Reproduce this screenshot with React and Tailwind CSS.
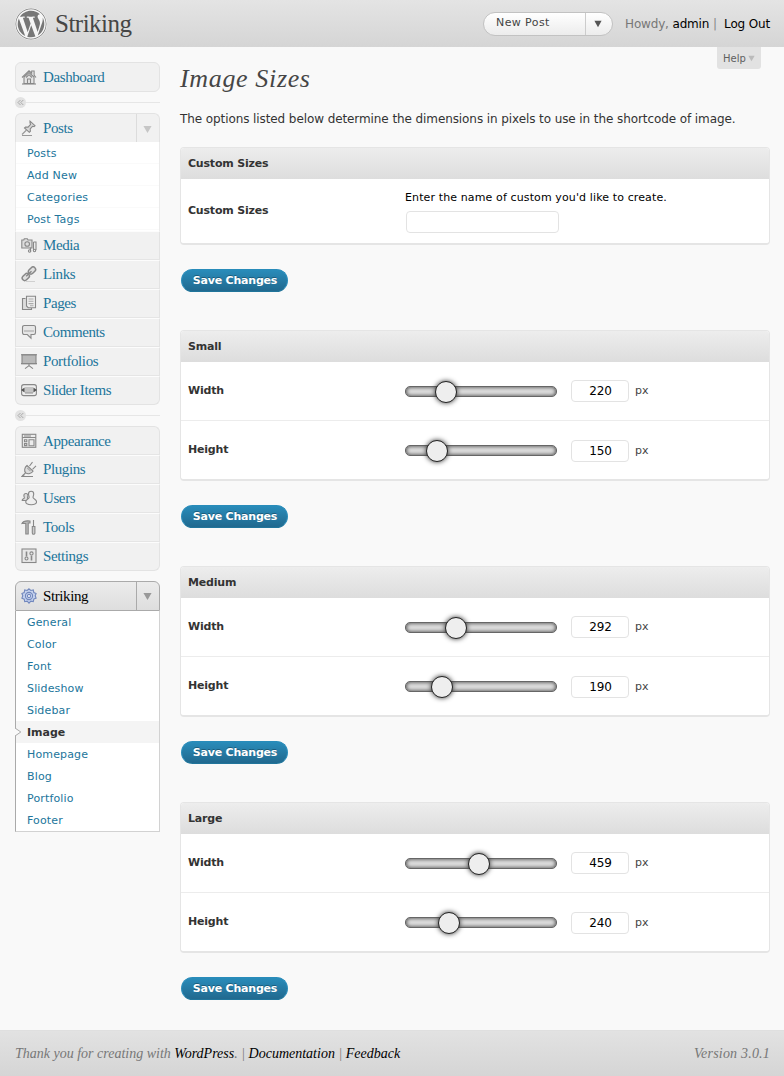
import React from "react";
import { FaWordpress } from "react-icons/fa";

const iconPaths = {
  home: (
    <g>
      <path fill="#e4e4e4" d="M3 8v6.500h10V8L8 3.500z" />
      <path d="M1 8.500 8 1.800l2.700 2.400V2h2.400v4.200L15 8.500" />
      <path d="M6.500 14.500V10h3v4.500M5 8.500 8 5.700l3 2.800" />
      <path d="M1 15h14" />
    </g>
  ),
  pin: (
    <g>
      <path fill="#d8d8d8" d="M9 1.200l5 4.500-1 .9-1.500-.3-2.300 2.600.2 2.400-1.100 1L3.500 8l1-1 2.600.1L9.600 4.400 9 3z" />
      <path d="M5.500 10 1 14.500M1 15.500h10" stroke="#999" />
    </g>
  ),
  media: (
    <g>
      <path fill="#ddd" d="M.8 3h2l.5-1.300h3L7 3h4v8H.8z" />
      <circle cx="6.200" cy="7" r="2.300" />
      <path d="M12.500 5H15v8M12.500 5v8M9.500 10.500v4" />
      <circle cx="8.600" cy="14" r="1.200" />
      <circle cx="13.500" cy="13.500" r="1.200" />
    </g>
  ),
  link: (
    <g strokeWidth="1.500">
      <rect x="7" y="2" width="8" height="5" rx="2.500" transform="rotate(-45 11 4.500)" fill="#e0e0e0" />
      <rect x=".8" y="8.500" width="8" height="5" rx="2.500" transform="rotate(-45 4.800 11)" fill="#e0e0e0" />
      <path d="M5.200 10.200 10.500 5.200" />
      <path d="M5 15.500h9" stroke="#d0d0d0" strokeWidth="1" />
    </g>
  ),
  pages: (
    <g>
      <path fill="#ddd" d="M4.500 3.500H1.500v11h9V13" />
      <path fill="#eee" d="M5.500 1.200h9v11.500H7.200L5.500 11z" />
      <path d="M7.500 4h5M7.500 6.300h5M7.500 8.600h5M9 10.700h3.500" stroke="#aaa" />
    </g>
  ),
  comment: (
    <g>
      <path fill="#e6e6e6" d="M3.200 1.500h9.600a1.700 1.700 0 0 1 1.700 1.700v5.600a1.700 1.700 0 0 1-1.700 1.700H10v3.700l-3.700-3.700H3.200a1.700 1.700 0 0 1-1.700-1.700V3.200a1.700 1.700 0 0 1 1.700-1.700z" />
      <path d="M3 7h10" stroke="#c4c4c4" strokeWidth="2" />
    </g>
  ),
  board: (
    <g>
      <rect x="1" y="1.800" width="14" height="8.800" fill="#b9b9b9" />
      <path d="M0 1.800h16M0 10.600h16M8 10.600V13M4 15.600 8 12.600l4 3" />
    </g>
  ),
  slider: (
    <g>
      <rect x=".6" y="2.600" width="14.800" height="11" rx="2.200" fill="#eee" />
      <rect x="4" y="5" width="8" height="6" fill="#c4c4c4" stroke="none" />
      <path fill="#555" stroke="none" d="M0 8 3.600 5.600v5zM16 8l-3.600-2.400v5z" />
      <path d="M4 11h8" stroke="#999" />
    </g>
  ),
  layout: (
    <g>
      <rect x="1.300" y="1.300" width="13.500" height="13" fill="#ececec" />
      <path d="M1.300 4.500h13.500M3 3h7" />
      <path d="M3.500 6.800h2.300v2H3.500zM3.500 10.600h2.300v2H3.500zM8 6.700h5v6H8z" />
    </g>
  ),
  plug: (
    <g>
      <path fill="#ddd" d="M6 4.500 12 10.200c-1.500 2.300-5 3.300-7.200 1.700C2.800 10 3.500 6.500 6 4.500z" />
      <path d="M8.500 5 11.500 1.200M11.500 8.300 15 4.800M4.500 12 1.200 15M3.300 13.800 1 15.500h11" />
      <path d="M6.200 7 9.500 10" stroke="#aaa" />
    </g>
  ),
  users: (
    <g>
      <path fill="#ddd" d="M5 3.500c1.300 0 1.900.9 1.900 2 0 1.200-.5 1.900-.4 2.700.4.700 1.500 1 1.700 2.300H1.200C1 8.800 3 8.900 3.300 8c.2-.7-.4-1.400-.4-2.500 0-1.100.7-2 2.100-2z" />
      <path fill="#eee" d="M10.200 1.200c1.600 0 2.500 1 2.500 2.700 0 1.700-.8 2.500-.6 3.700.4 1.400 3.300 1.600 3.500 4.200 0 2.200-1.800 2.900-5.300 2.900s-5.600-.7-5.600-2.900c.2-2.500 3-2.800 3.400-4.200.2-1.200-.6-2-.6-3.700 0-1.700 1.100-2.700 2.700-2.700z" />
    </g>
  ),
  tools: (
    <g>
      <path fill="#bbb" d="M1 4.500C2 2 4 1.500 9 2v2H7.200v11H4.800V4.500C3 4.300 2 4.300 1 4.500z" />
      <path fill="#ccc" d="M12.500 1v6M11.300 7.500h2.600v6.500a1.300 1.300 0 0 1-2.600 0z" />
    </g>
  ),
  sliders: (
    <g>
      <rect x="1" y="1" width="14" height="13.500" fill="#e8e8e8" />
      <path d="M5.500 3.500v5M10.500 8v4.500" strokeWidth="1.600" />
      <circle cx="5.500" cy="10.500" r="1.500" />
      <circle cx="10.500" cy="5.500" r="1.600" />
    </g>
  ),
  gear: (
    <g stroke="#7288bd">
      <path fill="#c5d2ee" d="M8 .8l1.800 1.700 2.500-.5.5 2.500 2.300 1-.900 2.300.900 2.300-2.300 1-.500 2.500-2.500-.500L8 15.200l-1.800-2-2.500.500-.500-2.500-2.300-1 .900-2.400-.900-2.300 2.300-1 .500-2.500 2.500.500z" />
      <circle cx="8" cy="8" r="3.600" />
      <circle cx="8" cy="8" r="1.600" fill="#f4f6fc" />
    </g>
  ),
};

function MenuIcon({ name }) {
  return (
    <svg className="ml-[5px] h-4 w-4 shrink-0" viewBox="0 0 16 16" fill="none" stroke="#888" strokeWidth="1.1">
      {iconPaths[name]}
    </svg>
  );
}

function Down({ className }) {
  return (
    <svg className={className} viewBox="0 0 10 10" fill="currentColor">
      <path d="M.5 1h9L5 9z" />
    </svg>
  );
}

const menuText = "ml-[6px] whitespace-nowrap font-['Liberation_Serif',serif] text-[15px] leading-[18px] tracking-[-0.4px]";

function MenuRow({ icon, label, first, last }) {
  return (
    <a
      className={
        "flex h-[29px] items-center border-x border-[#e3e3e3] bg-[#f1f1f1] text-[#21759b] " +
        (first ? "rounded-t-md border-t " : "border-t border-t-[#fcfcfc] pb-[2px] ") +
        (last ? "rounded-b-md border-b border-b-[#e3e3e3]" : "border-b border-b-[#e5e5e5]")
      }
    >
      <MenuIcon name={icon} />
      <span className={menuText}>{label}</span>
    </a>
  );
}

function Separator() {
  return (
    <div className="flex h-[11px] items-center">
      <span className="flex h-[11px] w-[11px] items-center justify-center rounded-full bg-[#e2e2e2]">
        <svg className="h-[7px] w-[7px]" viewBox="0 0 7 7" fill="none" stroke="#aaa">
          <path d="M3.500 1 1 3.500 3.500 6M6.300 1 3.800 3.500 6.300 6" />
        </svg>
      </span>
      <span className="h-px flex-1 bg-[#e6e6e6]" />
    </div>
  );
}

const subText = "pl-[11px] pt-px whitespace-nowrap font-['DejaVu_Sans',sans-serif] text-[11px] leading-[21px]";

function Sidebar() {
  return (
    <nav className="w-[145px] shrink-0 pt-[15px]">
      <a className="flex h-[30px] items-center rounded-md border border-[#e3e3e3] bg-[#f1f1f1] text-[#21759b]">
        <MenuIcon name="home" />
        <span className={menuText}>Dashboard</span>
      </a>
      <div className="pt-[5px] pb-[5px]"><Separator /></div>

      <div className="flex h-[29px] items-center rounded-t-md border border-b-0 border-[#e3e3e3] bg-[#f1f1f1] text-[#21759b]">
        <MenuIcon name="pin" />
        <span className={menuText + " flex-1"}>Posts</span>
        <span className="flex h-full w-[23px] items-center justify-center border-l border-[#dcdcdc] pr-px text-[#c6c6c6]">
          <Down className="mt-[3px] h-[9px] w-[9px]" />
        </span>
      </div>
      <div className="border-x border-[#ebebeb] bg-white pb-px">
        {["Posts", "Add New", "Categories", "Post Tags"].map((t) => (
          <a key={t} className={"block h-[22px] border-b border-[#fafafa] tracking-[0.2px] text-[#21759b] " + subText}>{t}</a>
        ))}
      </div>
      <MenuRow icon="media" label="Media" />
      <MenuRow icon="link" label="Links" />
      <MenuRow icon="pages" label="Pages" />
      <MenuRow icon="comment" label="Comments" />
      <MenuRow icon="board" label="Portfolios" />
      <MenuRow icon="slider" label="Slider Items" last />

      <div className="pt-[5px] pb-[5px]"><Separator /></div>
      <MenuRow icon="layout" label="Appearance" first />
      <MenuRow icon="plug" label="Plugins" />
      <MenuRow icon="users" label="Users" />
      <MenuRow icon="tools" label="Tools" />
      <MenuRow icon="sliders" label="Settings" last />

      <div className="mt-[10px] flex h-[30px] items-center rounded-t-md border border-[#aaa] bg-linear-to-b from-[#ececec] to-[#dedede] text-black">
        <MenuIcon name="gear" />
        <span className={menuText + " flex-1"}>Striking</span>
        <span className="flex h-full w-[23px] items-center justify-center border-l border-[#aaa] pr-px text-[#999]">
          <Down className="mt-px h-[9px] w-[9px]" />
        </span>
      </div>
      <div className="border border-t-0 border-[#d2d2d2] border-l-[#aaa] bg-white">
        {["General", "Color", "Font", "Slideshow", "Sidebar", "Image", "Homepage", "Blog", "Portfolio", "Footer"].map((t) =>
          t === "Image" ? (
            <a key={t} className={"relative block h-[22px] bg-[#f4f4f4] font-bold text-[#333] " + subText}>
              <svg className="absolute -left-px top-[7px] h-[8px] w-[7px]" viewBox="0 0 7 8">
                <path d="M0 0 5.800 4 0 8" fill="#f9f9f9" stroke="#aaa" />
              </svg>
              {t}
            </a>
          ) : (
            <a key={t} className={"block h-[22px] tracking-[0.15px] text-[#21759b] " + subText}>{t}</a>
          )
        )}
      </div>
    </nav>
  );
}

function Panel({ title, children }) {
  return (
    <section className="overflow-hidden rounded-[4px] border border-b-2 border-[#e5e5e5] bg-white">
      <h3 className="h-[31px] bg-linear-to-b from-[#ededed] to-[#dddddd] pl-[7px] text-[11px] leading-[31px] font-bold tracking-[-0.2px] text-[#333]">{title}</h3>
      {children}
    </section>
  );
}

function SaveButton() {
  return (
    <button className="mt-[24px] mb-[38px] ml-px block h-[23px] w-[107px] rounded-full border border-[#298cba] border-b-[#21759b] bg-linear-to-b from-[#298cba] to-[#21698f] pt-px pl-px text-[11px] leading-[20px] font-bold tracking-[-0.2px] whitespace-nowrap text-white [text-shadow:0_-1px_0_rgba(0,0,0,0.3)]">
      Save Changes
    </button>
  );
}

function SliderRow({ label, value, knob, divider }) {
  return (
    <div className={"flex items-center " + (divider ? "h-[59px] border-b border-[#ececec]" : "h-[58px] pt-px")}>
      <span className={"w-[224px] pl-[7px] text-[11px] font-bold tracking-[-0.2px] text-[#333] " + (divider ? "pt-px" : "")}>{label}</span>
      <div className="relative h-[11px] w-[152px] rounded-[5px] border border-[#666] bg-[#dedede] shadow-[inset_0_0_4px_#333]">
        <span
          className="absolute top-[-6px] h-[22px] w-[22px] rounded-full border-[1.5px] border-[#222] bg-[#eee] shadow-[0_0_5px_#333]"
          style={{ left: knob - 12 + "px" }}
        />
      </div>
      <span className="ml-[14px] flex h-[22px] w-[58px] items-center justify-center rounded-[4px] border border-[#e3e3e3] bg-white pl-px text-[12px] tracking-[-0.2px] text-black">{value}</span>
      <span className="ml-[6px] pt-px text-[11px] text-[#444]">px</span>
    </div>
  );
}

const groups = [
  { title: "Small", width: [220, 41], height: [150, 31.5] },
  { title: "Medium", width: [292, 51], height: [190, 37] },
  { title: "Large", width: [459, 73.5], height: [240, 43.5] },
];

export default function App() {
  return (
    <div className="flex h-[1076px] w-[784px] flex-col overflow-hidden bg-[#f9f9f9] font-['DejaVu_Sans',sans-serif] text-[#333]">
      <header className="flex h-[47px] shrink-0 items-center bg-linear-to-b from-[#e4e4e4] to-[#d5d5d5] pr-[14px] pl-[15px]">
        <FaWordpress className="h-8 w-8 rounded-full bg-[#f6f6f6] text-[#777]" />
        <h1 className="ml-[8px] flex-1 font-['Liberation_Serif',serif] text-[25px] leading-8 tracking-[-0.5px] text-[#464646]">Striking</h1>
        <div className="flex h-[24px] w-[130px] items-center rounded-full border border-[#c2c2c2] bg-linear-to-b from-white to-[#ececec] text-[11px] text-[#444]">
          <span className="flex-1 pl-[12px] tracking-[0.4px]">New Post</span>
          <span className="flex h-full w-[27px] items-center border-l border-[#ccc] pl-[8px] text-[#555]">
            <Down className="h-[8px] w-[8px]" />
          </span>
        </div>
        <div className="ml-[12px] flex text-[12px] tracking-[-0.16px] whitespace-pre">
          <span className="text-[#777]">Howdy, </span>
          <span className="text-black">admin</span>
          <span className="text-[#888]"> |  </span>
          <span className="text-black">Log Out</span>
        </div>
      </header>

      <div className="flex min-h-0 flex-1 pl-[15px]">
        <Sidebar />
        <main className="ml-5 w-[590px]">
          <div className="flex h-[100px] justify-between">
            <div>
              <h2 className="mt-[16px] font-['Liberation_Serif',serif] text-[26px] leading-8 tracking-[0.65px] text-[#464646] italic">Image Sizes</h2>
              <p className="mt-[15px] text-[12px] leading-[18px] tracking-[-0.09px] whitespace-nowrap">The options listed below determine the dimensions in pixels to use in the shortcode of image.</p>
            </div>
            <span className="mr-[9px] -ml-20 flex h-[22px] w-[44px] items-center rounded-b-[3px] bg-[#e2e2e2] pl-[6px] text-[10px] text-[#606060]">
              Help
              <Down className="ml-[2px] h-[7px] w-[7px] text-[#bbb]" />
            </span>
          </div>
          <Panel title="Custom Sizes">
            <div className="flex h-[64px] items-center">
              <span className="w-[224px] pt-px pl-[7px] text-[11px] font-bold tracking-[-0.2px]">Custom Sizes</span>
              <div className="flex flex-col pt-px">
                <span className="text-[11px] leading-4 tracking-[0.12px] text-black">Enter the name of custom you'd like to create.</span>
                <span className="mt-[5px] ml-px h-[22px] w-[153px] rounded-[4px] border border-[#e3e3e3] bg-white" />
              </div>
            </div>
          </Panel>
          <SaveButton />
          {groups.map((g) => (
            <React.Fragment key={g.title}>
              <Panel title={g.title}>
                <SliderRow label="Width" value={g.width[0]} knob={g.width[1]} divider />
                <SliderRow label="Height" value={g.height[0]} knob={g.height[1]} />
              </Panel>
              <SaveButton />
            </React.Fragment>
          ))}
        </main>
      </div>

      <footer className="flex h-[46px] shrink-0 items-center justify-between border-t border-[#dfdfdf] bg-linear-to-b from-[#e2e2e2] to-[#d5d5d5] pr-[14px] pl-[15px] font-['Liberation_Serif',serif] text-[14px] text-[#777] italic">
        <p className="whitespace-pre">
          Thank you for creating with <span className="text-black">WordPress</span>. | <span className="text-black">Documentation</span> | <span className="text-black">Feedback</span>
        </p>
        <p className="tracking-[0.2px]">Version 3.0.1</p>
      </footer>
    </div>
  );
}
